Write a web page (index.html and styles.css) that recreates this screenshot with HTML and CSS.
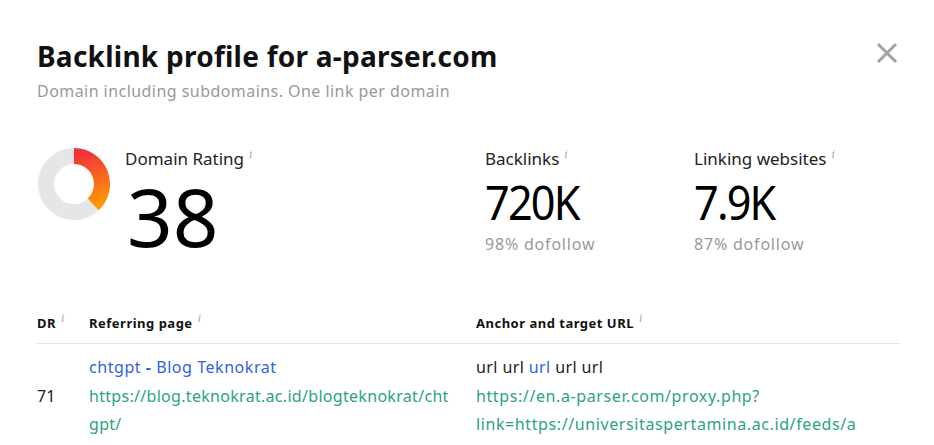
FILE: index.html
```html
<!DOCTYPE html>
<html>
<head>
<meta charset="utf-8">
<link rel="stylesheet" href="styles.css">
</head>
<body>
<div class="modal">
  <div class="header">
    <div class="titles">
      <h1 class="title">Backlink profile for a-parser.com</h1>
      <div class="subtitle">Domain including subdomains. One link per domain</div>
    </div>
    <div class="close">
      <svg width="22" height="22" viewBox="0 0 22 22"><path d="M2 2 L20 20 M20 2 L2 20" stroke="#a3a3a3" stroke-width="3" fill="none"/></svg>
    </div>
  </div>

  <div class="stats">
    <div class="stat stat-dr">
      <svg class="donut" width="74" height="74" viewBox="0 0 74 74">
        <defs>
          <linearGradient id="g" gradientUnits="userSpaceOnUse" x1="42" y1="8" x2="58" y2="60">
            <stop offset="0" stop-color="#f2333b"/>
            <stop offset="1" stop-color="#ff9c00"/>
          </linearGradient>
        </defs>
        <circle cx="37" cy="37" r="28" fill="none" stroke="#e6e6e6" stroke-width="16"/>
        <path d="M37 9 A28 28 0 0 1 56.17 57.41" fill="none" stroke="url(#g)" stroke-width="16"/>
      </svg>
      <div class="stat-text">
        <div class="label">Domain Rating<sup class="info">i</sup></div>
        <div class="big">38</div>
      </div>
    </div>
    <div class="stat stat-bl">
      <div class="label">Backlinks<sup class="info">i</sup></div>
      <div class="mid"><span class="mid-num">720K</span></div>
      <div class="sub">98% dofollow</div>
    </div>
    <div class="stat stat-lw">
      <div class="label">Linking websites<sup class="info">i</sup></div>
      <div class="mid"><span class="mid-num">7.9K</span></div>
      <div class="sub">87% dofollow</div>
    </div>
  </div>

  <div class="table">
    <div class="row head">
      <div class="c-dr">DR<sup class="info">i</sup></div>
      <div class="c-ref">Referring page<sup class="info">i</sup></div>
      <div class="c-anc">Anchor and target URL<sup class="info">i</sup></div>
    </div>
    <div class="row body">
      <div class="c-dr num">71</div>
      <div class="c-ref">
        <div class="anchor-line"><span class="blue">chtgpt</span> <span class="dash">-</span> <span class="blue">Blog Teknokrat</span></div>
        <div class="green">https://blog.teknokrat.ac.id/blogteknokrat/cht<br>gpt/</div>
      </div>
      <div class="c-anc">
        <div class="anchor-line">url url <span class="blue">url</span> url url</div>
        <div class="green">https://en.a-parser.com/proxy.php?<br>link=https://universitaspertamina.ac.id/feeds/a</div>
      </div>
    </div>
  </div>
</div>
</body>
</html>
```

FILE: styles.css
```css
html, body {
  margin: 0;
  padding: 0;
  background: #fff;
  overflow: hidden;
}
body {
  font-family: "Noto Sans", Roboto, sans-serif;
  color: #1a1a1a;
}
.modal {
  width: 934px;
  height: 445px;
  padding: 38px 34px 0 37px;
  box-sizing: border-box;
}
.header {
  display: flex;
  justify-content: space-between;
  align-items: flex-start;
}
.title {
  margin: 0;
  font-size: 28px;
  line-height: 36px;
  font-weight: 700;
  color: #111;
  letter-spacing: 0.25px;
}
.subtitle {
  margin-top: 6px;
  font-size: 16px;
  line-height: 22px;
  color: #999;
  letter-spacing: 0.45px;
}
.close {
  margin-top: 4px;
  margin-right: 2px;
}
.close svg { display: block; }

.stats {
  display: flex;
  margin-top: 45px;
}
.stat-dr {
  display: flex;
  width: 448px;
}
.donut {
  display: block;
}
.stat-text {
  margin-left: 14px;
}
.stat-bl { width: 209px; }
.label {
  font-size: 17px;
  line-height: 24px;
  color: #222;
}
.info {
  font-size: 11px;
  color: #aaa;
  margin-left: 5px;
  vertical-align: top;
  position: relative;
  top: -4px;
  font-family: "DejaVu Serif", serif;
  font-style: italic;
  letter-spacing: 0;
  font-weight: 400;
}
.big {
  font-size: 80px;
  line-height: 70px;
  color: #000;
  margin-top: 10px;
  margin-left: 2px;
}
.mid {
  font-size: 48px;
  line-height: 52px;
  color: #000;
  margin-top: 5px;
}
.mid-num {
  display: inline-block;
  letter-spacing: -2px;
  transform: scaleX(0.9);
  transform-origin: left center;
}
.sub {
  font-size: 16px;
  line-height: 22px;
  color: #999;
  margin-top: 5px;
  letter-spacing: 0.8px;
}

.table {
  margin-top: 58px;
  width: 863px;
}
.row {
  display: flex;
}
.head {
  font-size: 13px;
  font-weight: 700;
  color: #111;
  line-height: 20px;
  padding-bottom: 10px;
  border-bottom: 1px solid #e3e3e3;
  letter-spacing: 0.5px;
}
.c-dr { width: 52px; flex: none; }
.c-ref { width: 387px; flex: none; }
.c-anc { flex: 1; }
.body {
  font-size: 16px;
  line-height: 28.5px;
  padding-top: 9px;
  color: #222;
}
.num {
  padding-top: 28.5px;
}
.anchor-line { letter-spacing: 0.4px; }
.c-ref .anchor-line { letter-spacing: 0.55px; }
.green { letter-spacing: 0.6px; white-space: nowrap; }
.c-ref .green { letter-spacing: 0.3px; }
.blue { color: #2f62e3; }
.dash { color: #2f62e3; font-weight: 700; }
.green { color: #2aa37f; }
```
